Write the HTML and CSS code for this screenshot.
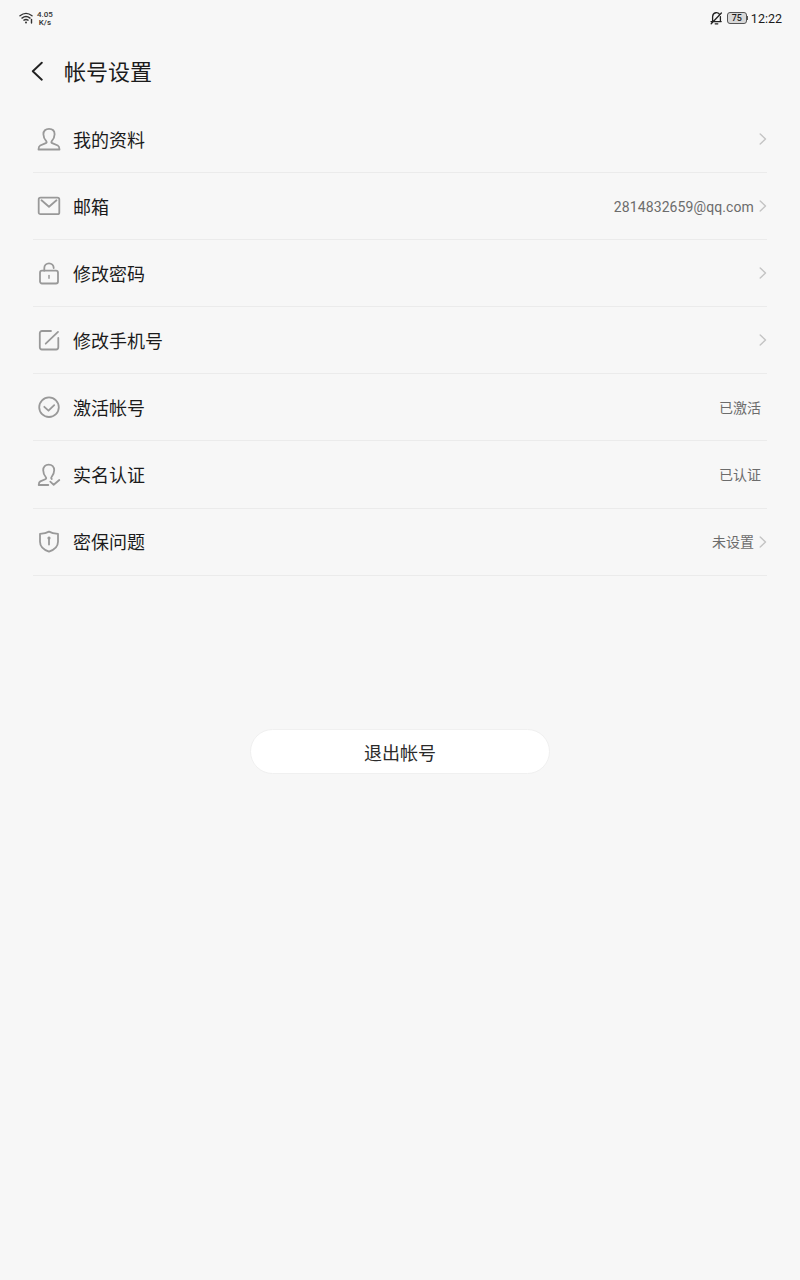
FILE: index.html
```
<!DOCTYPE html>
<html lang="zh-CN">
<head>
<meta charset="utf-8">
<title>帐号设置</title>
<link rel="stylesheet" href="styles.css">
</head>
<body>
<header class="status">
  <div class="status-left">
    <svg class="wifi" width="15" height="12" viewBox="0 0 15 12"><path d="M1 3.800Q7 -1 13 3.800M3 6.100Q7 3 11 6.100M5 8.200Q7 6.900 9 8.200"/><circle class="dot" cx="7" cy="10.400" r="1"/><path class="thin" d="M12.500 7.500v3.500"/></svg>
    <div class="speed"><span>4.05</span><span>K/s</span></div>
  </div>
  <div class="status-right">
    <svg class="bell" width="13" height="14" viewBox="0 0 13 14"><path d="M2.600 9.800V5.800C2.800 0.900 8.500 0.600 9.700 3.800M10.400 5.600V10.600H4M1 10.600h1.200M10.400 10.600h.8M1.200 12.800L11.400 2M5.200 12.800h2.600"/></svg>
    <span class="battery">75</span>
    <span class="clock">12:22</span>
  </div>
</header>
<div class="titlebar">
  <svg class="back" width="14" height="20" viewBox="0 0 14 20"><path d="M11.800 1.700L2.800 10.200l9 8.500"/></svg>
  <h1>帐号设置</h1>
</div>
<main class="list">
  <div class="row">
    <svg class="icon" viewBox="0 0 24 24"><path d="M9.400 14.400C7.800 12.600 6.400 10 6.400 7.200 6.400 3.900 8.600 1.800 12 1.800s5.600 2.100 5.600 5.400c0 2.800-1.400 5.400-3 7.200-.5.700-.3 1.300.6 1.700l5.600 2.400c1 .5 1.600 1.500 1.700 4H1.500c.1-2.500.7-3.500 1.700-4l5.600-2.400c.9-.4 1.100-1 .6-1.700z"/></svg>
    <span class="label">我的资料</span>
    <svg class="arrow" viewBox="0 0 8 12"><path d="M1.200 1L6.500 6 1.200 11"/></svg>
  </div>
  <div class="row">
    <svg class="icon" viewBox="0 0 24 24"><rect x="1.700" y="3.700" width="20.600" height="16.500" rx="1.800"/><path d="M4.500 6.300l7.500 6.500 7.500-6.500"/></svg>
    <span class="label">邮箱</span>
    <span class="value email">2814832659@qq.com</span>
    <svg class="arrow" viewBox="0 0 8 12"><path d="M1.200 1L6.500 6 1.200 11"/></svg>
  </div>
  <div class="row">
    <svg class="icon" viewBox="0 0 24 24"><rect x="3" y="9.700" width="18" height="12.800" rx="2"/><path d="M7.300 9.700V7a4.700 4.700 0 0 1 9.400 0"/><path class="fine" d="M12 14.500v2.700"/></svg>
    <span class="label">修改密码</span>
    <svg class="arrow" viewBox="0 0 8 12"><path d="M1.200 1L6.500 6 1.200 11"/></svg>
  </div>
  <div class="row">
    <svg class="icon" viewBox="0 0 24 24"><path d="M14 3H5a2.200 2.200 0 0 0-2.200 2.200v14.100A2.200 2.200 0 0 0 5 21.500h14.100a2.200 2.200 0 0 0 2.200-2.200V10M8.700 15.700L21 3.900"/></svg>
    <span class="label">修改手机号</span>
    <svg class="arrow" viewBox="0 0 8 12"><path d="M1.200 1L6.500 6 1.200 11"/></svg>
  </div>
  <div class="row">
    <svg class="icon" viewBox="0 0 24 24"><circle cx="12" cy="12.200" r="9.800"/><path d="M7.300 11.800l4.200 3.900 5.700-5.600"/></svg>
    <span class="label">激活帐号</span>
    <span class="value flush">已激活</span>
  </div>
  <div class="row">
    <svg class="icon" viewBox="0 0 24 24"><path d="M11.300 22H1.700c.1-2.100.6-3.100 1.600-3.600l5-2.200c.9-.4 1.200-1 .7-1.700C7.400 12.600 6.200 10 6.200 7.200 6.200 3.900 8.400 1.600 11.700 1.600s5.500 2.300 5.500 5.600c0 2.800-1.200 5-2.600 6.800-.7.900-.5 1.600.2 2.100M13.300 18.600l3.400 3.200 5.600-4.800"/></svg>
    <span class="label">实名认证</span>
    <span class="value flush">已认证</span>
  </div>
  <div class="row">
    <svg class="icon" viewBox="0 0 24 24"><path d="M12 1.600c2.400 1.400 5.400 2 9 2.200v7.900c0 4.600-3.300 7.900-9 9.900-5.700-2-9-5.300-9-9.900V3.800c3.600-.2 6.600-.8 9-2.200zM12 7.600v7"/><circle class="dot" cx="12" cy="8" r="1.600"/></svg>
    <span class="label">密保问题</span>
    <span class="value">未设置</span>
    <svg class="arrow" viewBox="0 0 8 12"><path d="M1.200 1L6.500 6 1.200 11"/></svg>
  </div>
</main>
<button class="logout" type="button">退出帐号</button>
</body>
</html>
```
FILE: styles.css
```
* { box-sizing: border-box; }
body {
  margin: 0;
  min-height: 1280px;
  background: #f7f7f7;
  color: #1b1b1b;
  font-family: Roboto, "Noto Sans CJK SC", sans-serif;
}
svg {
  display: block;
  flex: none;
  fill: none;
  stroke-linecap: round;
  stroke-linejoin: round;
}
.status {
  height: 36px;
  padding: 0 18px 0 19px;
  display: flex;
  align-items: center;
  justify-content: space-between;
}
.status-left, .status-right { display: flex; align-items: center; }
.wifi { stroke: #333; stroke-width: 1.4; }
.wifi .dot { fill: #333; stroke: none; }
.speed {
  display: flex;
  flex-direction: column;
  align-items: center;
  margin: 1px 0 0 3px;
  font-size: 8px;
  line-height: 8px;
  font-weight: 500;
  color: #333;
}
.bell { stroke: #222; stroke-width: 1.3; }
.battery {
  position: relative;
  width: 20px;
  height: 12px;
  margin: 0 4px 0 4px;
  border: 1px solid #555;
  border-radius: 3px;
  background: #d8d8d8;
  font-size: 9px;
  line-height: 11px;
  font-weight: 500;
  text-align: center;
}
.battery::after {
  content: "";
  position: absolute;
  right: -2px;
  top: 3px;
  width: 1px;
  height: 4px;
  background: #555;
}
.clock { margin-top: 1px; font-size: 12.5px; line-height: 16px; }
.titlebar {
  height: 70px;
  padding-left: 30px;
  display: flex;
  align-items: center;
}
.back { stroke: #222; stroke-width: 1.9; }
h1 {
  margin: 4px 0 0 20px;
  font-size: 22px;
  line-height: 32px;
  font-weight: 400;
}
.list { padding: 0 33px; }
.row {
  height: 67.100px;
  padding-left: 4px;
  display: flex;
  align-items: center;
  border-bottom: 1px solid #ebebeb;
}
.icon { width: 24px; height: 24px; stroke: #999; stroke-width: 1.8; }
.icon .dot { fill: #999; stroke: none; }
.icon .fine { stroke-width: 1.5; }
.label {
  margin: 3.500px auto 0 12px;
  font-size: 18px;
  line-height: 26px;
}
.value {
  margin: 1px 5px 0 0;
  font-size: 14px;
  line-height: 20px;
  color: #6c6c6c;
}
.value.email { letter-spacing: 0.1px; }
.value.flush { margin-right: 6px; }
.arrow { width: 8px; height: 12px; stroke: #c4c4c4; stroke-width: 1.4; }
.logout {
  display: block;
  width: 300px;
  height: 45px;
  margin: 153.500px auto 0;
  padding: 4px 0 0;
  border: 1px solid #f0f0f0;
  border-radius: 23px;
  background: #fff;
  color: #2b2b2b;
  font: inherit;
  font-size: 18px;
  line-height: 26px;
}
```
